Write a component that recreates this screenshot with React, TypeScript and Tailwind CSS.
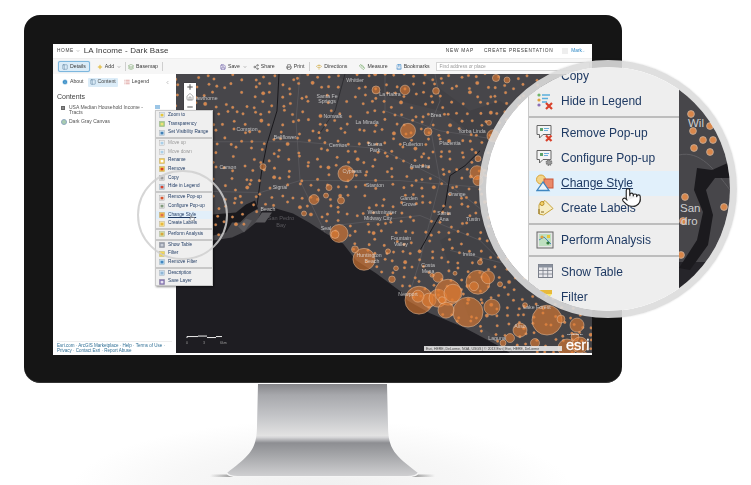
import React from "react";
import { Pointer, Plus, Minus, ChevronLeft, Info, Save, Share2, Printer, Signpost, Ruler, BookMarked, Home, Layers, PanelLeft, List, ChevronDown } from "lucide-react";

type Pt = [number, number];

const COAST: Pt[] = [
  [170, 70], [600, 70], [600, 358], [518, 358], [497, 345], [463, 327], [430, 313], [407, 300], [403, 293], [376, 273],
  [356, 260], [343, 243], [326, 233], [309, 222], [293, 213], [276, 208], [262, 210], [256, 222], [245, 231], [232, 237], [213, 240], [170, 240],
];

function inside(p: Pt, poly: Pt[]) {
  let c = false;
  for (let i = 0, j = poly.length - 1; i < poly.length; j = i++) {
    const [xi, yi] = poly[i];
    const [xj, yj] = poly[j];
    if (yi > p[1] !== yj > p[1] && p[0] < ((xj - xi) * (p[1] - yi)) / (yj - yi) + xi) c = !c;
  }
  return c;
}

function makeDots() {
  let s = 12345;
  const rnd = () => {
    s = (s * 16807) % 2147483647;
    return s / 2147483647;
  };
  const out: Pt[] = [];
  for (let y = 76; y < 352; y += 9.2) {
    for (let x = 178; x < 592; x += 9.4) {
      const p: Pt = [x + (rnd() - 0.5) * 7, y + (rnd() - 0.5) * 7];
      if (rnd() < 0.14) continue;
      if (inside([p[0], p[1] + 3], COAST)) out.push(p);
    }
  }
  return out;
}

const DOTS = makeDots();

const CIRCLES: [number, number, number][] = [
  [376, 89, 4], [405, 89, 4.8], [436, 90, 3.4], [496, 77, 3.6], [507, 79, 3], [408, 130, 7.5], [428, 131, 4], [346, 173, 8], [489, 122, 2.5],
  [478, 158, 3], [477, 172, 7], [478, 180, 5], [493, 135, 6], [263, 166, 3], [329, 187, 3], [314, 199, 5], [341, 200, 3.5], [326, 195, 2.5],
  [304, 213, 2.5], [339, 233, 9], [335, 234, 4], [364, 259, 11], [355, 249, 3.5], [392, 279, 3.3], [396, 268, 2.4], [388, 251, 2.5],
  [419, 300, 14], [429, 300, 7], [418, 296, 6], [438, 277, 5], [438, 298, 9], [448, 292, 13], [453, 293, 9], [468, 312, 15], [446, 310, 8],
  [442, 300, 3.5], [478, 282, 12], [488, 277, 6.5], [474, 286, 4.5], [492, 307, 8], [547, 320, 15], [520, 330, 7], [577, 325, 7], [575, 337, 4],
  [535, 343, 4.5], [510, 338, 4.5], [503, 343, 3], [567, 348, 9], [580, 345, 8], [561, 319, 4], [525, 305, 2.5], [500, 284, 2.5], [455, 273, 2],
  [432, 275, 2], [480, 262, 2.5], [565, 295, 3], [585, 300, 2.5],
];

const LABELS: [string, number, number][] = [
  ["Hawthorne", 205, 99], ["Compton", 247, 130], ["Bellflower", 285, 138], ["Carson", 228, 168], ["Cerritos", 338, 146], ["Norwalk", 333, 117],
  ["Santa Fe", 327, 97], ["Springs", 327, 102], ["Whittier", 355, 81], ["La Habra", 390, 95], ["La Mirada", 367, 123], ["Buena", 375, 145], ["Park", 375, 151],
  ["Fullerton", 413, 145], ["Placentia", 450, 144], ["Yorba Linda", 472, 132], ["Brea", 436, 116], ["Anaheim", 420, 167], ["Stanton", 375, 186], ["Cypress", 352, 172],
  ["Orange", 457, 195], ["Garden", 409, 199], ["Grove", 409, 205], ["Westminster", 382, 214], ["Midway City", 378, 220], ["Santa", 444, 215], ["Ana", 444, 221],
  ["Tustin", 473, 221], ["Fountain", 401, 240], ["Valley", 401, 246], ["Huntington", 369, 257], ["Beach", 372, 263], ["Seal", 326, 230], ["Beach", 268, 210], ["Costa", 428, 267],
  ["Mesa", 428, 273], ["Newport", 408, 296], ["Irvine", 469, 256], ["Laguna", 497, 340], ["Aliso", 520, 328], ["Lake Forest", 537, 309], ["Signal", 280, 188],
];

function MapSvg() {
  return (
    <svg viewBox="176 73 416 280" className="block w-full h-full" preserveAspectRatio="none">
      <rect x="176" y="73" width="416" height="280" fill="#1e1d22" />
      <polygon points={COAST.map((p) => p.join(",")).join(" ")} fill="#47464a" />
      <polygon points="330,73 420,73 470,110 500,100 530,120 510,160 440,110 400,100" fill="#424145" />
      <polygon points="440,240 592,150 592,352 520,352 470,320" fill="#424246" />
      <g fill="none" stroke="#5d5c60" strokeWidth="0.7">
        <path d="M176 141 H300 L380 148 L440 178 L470 200 L520 240 L592 250" />
        <path d="M300 73 L296 120 L300 180 L325 232" />
        <path d="M385 73 L385 110 L440 130 L505 140 L592 150" />
        <path d="M435 73 L440 100 L430 125 L440 180 L420 260 L410 292" />
        <path d="M300 180 H400 L520 190 L592 170" />
        <path d="M335 225 L420 215 L480 240 L540 300" />
        <path d="M176 190 L260 192 L300 180" />
        <path d="M450 250 L500 262 L560 262" />
      </g>
      <g fill="none" stroke="#19181c" strokeWidth="1">
        <path d="M279 73 L277 110 L267 143 L262 168 L257 205" />
        <path d="M480 150 L465 165 L450 175 L445 205 L420 250" />
        <path d="M345 73 L335 110 L318 135" strokeWidth="0.5" />
      </g>
      <g fill="#1a191d">
        <polygon points="213,214 236,212 246,204 255,200 258,208 248,214 240,222 232,222 226,232 213,235" />
        <polygon points="255,222 262,212 272,212 265,222" fill="#5a595d" />
        <polygon points="238,226 246,218 252,220 244,232" fill="#5a595d" />
      </g>
      <g fill="#d8864a" stroke="#a88b78" strokeWidth="0.3">
        {DOTS.map((d, i) => (
          <circle key={i} cx={d[0]} cy={d[1]} r={i % 17 === 0 ? 1.8 : 1.3} />
        ))}
      </g>
      <g fill="#e07a30" fillOpacity="0.62" stroke="#e8bd9b" strokeOpacity="0.75" strokeWidth="0.7">
        {CIRCLES.map((c, i) => (
          <circle key={i} cx={c[0]} cy={c[1]} r={c[2]} />
        ))}
      </g>
      <g fill="#e6e6e6" fontFamily="'Liberation Sans', sans-serif" fontSize="5.2" textAnchor="middle" fillOpacity="0.75">
        {LABELS.map((l, i) => (
          <text key={i} x={l[1]} y={l[2]}>
            {l[0]}
          </text>
        ))}
      </g>
      <g fill="#5a595e" fontFamily="'Liberation Sans', sans-serif" fontSize="5.6" textAnchor="middle">
        <text x="281" y="220">San Pedro</text>
        <text x="281" y="227">Bay</text>
      </g>
      <path d="M187 338 V336.5 H198 M198 336 H207 M207 337.5 H216 M216 336.5 H222" stroke="#eee" strokeWidth="1" fill="none" />
      <g fill="#9a9a9a" fontFamily="'Liberation Sans', sans-serif" fontSize="3.6">
        <text x="186" y="344">0</text>
        <text x="203" y="344">3</text>
        <text x="220" y="344">6km</text>
      </g>
      <rect x="424" y="346" width="138" height="5" fill="#e9e9e9" fillOpacity="0.9" />
      <text x="426" y="350" fontFamily="'Liberation Sans', sans-serif" fontSize="3.5" fill="#444">Esri, HERE, DeLorme, NGA, USGS | © 2013 Esri | Esri, HERE, DeLorme</text>
      <text x="567" y="335" fontFamily="'Liberation Sans', sans-serif" fontSize="2.4" fill="#ffffff">POWERED BY</text>
      <text x="566" y="350" fontFamily="'Liberation Sans', sans-serif" fontSize="14.5" fill="#ffffff" stroke="#ffffff" strokeWidth="0.3">esri</text>
    </svg>
  );
}

function Mini({ a, b }: { a: string; b: string }) {
  return (
    <svg viewBox="0 0 6 6" className="w-[6px] h-[6px] shrink-0">
      <rect x="0.3" y="0.3" width="5.4" height="5.4" fill={a} stroke="#9a9a9a" strokeWidth="0.3" />
      <rect x="1.6" y="1.8" width="2.8" height="2.6" fill={b} />
    </svg>
  );
}

type Row = { t: string; a: string; b: string; off?: boolean; on?: boolean };

const SMALL: Row[][] = [
  [
    { t: "Zoom to", a: "#dce9f5", b: "#e8c63a" },
    { t: "Transparency", a: "#9fcf7d", b: "#f1e07a" },
    { t: "Set Visibility Range", a: "#cfe0ee", b: "#3f7fb5" },
  ],
  [
    { t: "Move up", a: "#eeeeee", b: "#a9cfe9", off: true },
    { t: "Move down", a: "#eeeeee", b: "#a9cfe9", off: true },
    { t: "Rename", a: "#f3c94c", b: "#ffffff" },
    { t: "Remove", a: "#f0d050", b: "#d8402a" },
    { t: "Copy", a: "#dddddd", b: "#9a9a9a" },
    { t: "Hide in Legend", a: "#b9d6ea", b: "#d8402a" },
  ],
  [
    { t: "Remove Pop-up", a: "#e6e6e6", b: "#d8502a" },
    { t: "Configure Pop-up", a: "#e6e6e6", b: "#7f9a7a" },
    { t: "Change Style", a: "#f2c14e", b: "#e0704a", on: true },
    { t: "Create Labels", a: "#f4e3a0", b: "#e8b93a" },
  ],
  [{ t: "Perform Analysis", a: "#cfe0a8", b: "#d9a53a" }],
  [
    { t: "Show Table", a: "#8f97a5", b: "#c9ced6" },
    { t: "Filter", a: "#f5e05a", b: "#e8b93a" },
    { t: "Remove Filter", a: "#bcdcf0", b: "#3f86c0" },
  ],
  [
    { t: "Description", a: "#c9dff0", b: "#8fb5d5" },
    { t: "Save Layer", a: "#7f6db0", b: "#e6e0f0" },
  ],
];

function SmallMenu() {
  return (
    <div className="absolute left-[102px] top-[66px] w-[58px] h-[176px] bg-[#efefef] border border-[#c9c9c9] shadow-[1px_1px_2px_rgba(0,0,0,0.45)]">
      {SMALL.map((sec, i) => (
        <div key={i} className="border-b-2 border-[#c8c8c8] last:border-b-0">
          {sec.map((r) => (
            <div key={r.t} className={`flex items-center gap-[3.5px] pl-[2.5px] h-[8.7px] text-[4.7px] leading-none ${r.on ? "bg-[#e2effa] underline" : ""} ${r.off ? "text-[#9a9a9a]" : "text-[#1f3a63]"}`}>
              <Mini a={r.a} b={r.b} />
              <span className="whitespace-nowrap">{r.t}</span>
            </div>
          ))}
        </div>
      ))}
    </div>
  );
}

function Btn({ icon, label, on, caret, className }: { icon: React.ReactNode; label: string; on?: boolean; caret?: boolean; className?: string }) {
  return (
    <div className={`flex items-center gap-[2px] h-[11px] text-[5.2px] text-[#3a3a3a] whitespace-nowrap ${on ? "border border-[#7db7de] rounded-[2px] bg-[#dbecf8] px-[3px] shadow-[0_0_1px_#7db7de]" : ""} ${className ?? ""}`}>
      {icon}
      <span>{label}</span>
      {caret && <ChevronDown size={4} strokeWidth={2} className="ml-[1px]" />}
    </div>
  );
}

function Screen() {
  return (
    <div className="relative w-[539px] h-[311px] bg-white flex flex-col blur-[0.3px] font-['Liberation_Sans',sans-serif]">
      <div className="flex items-center h-[14px] shrink-0 pl-[4px] pr-[7px]">
        <span className="text-[4.8px] tracking-[0.6px] text-[#444]">HOME</span>
        <ChevronDown size={4} className="ml-[2px] text-[#555]" />
        <span className="ml-[4px] text-[8px] tracking-[0.12px] text-[#3a3a3a]">LA Income - Dark Base</span>
        <span className="ml-auto text-[4.8px] tracking-[0.75px] text-[#3a3a3a]">NEW MAP</span>
        <span className="ml-[10px] text-[4.8px] tracking-[0.65px] text-[#3a3a3a]">CREATE PRESENTATION</span>
        <span className="ml-[9px] w-[6px] h-[6px] bg-[#eeeeee]" />
        <span className="ml-[3px] text-[4.8px] text-[#2a86c4]">Mark</span>
        <ChevronDown size={3} className="text-[#2a86c4]" />
      </div>
      <div className="flex items-center h-[16px] shrink-0 bg-[#f6f6f6] pl-[5px] border-t border-[#eeeeee]">
        <Btn on label="Details" icon={<PanelLeft size={6} className="text-[#5a7f9c]" />} />
        <Btn className="ml-[7px]" caret label="Add" icon={<Plus size={6} strokeWidth={4} className="text-[#e0b62c]" />} />
        <span className="ml-[4px] w-px h-[9px] bg-[#cfcfcf]" />
        <Btn className="ml-[2px]" label="Basemap" icon={<Layers size={6} className="text-[#6a9a5a]" />} />
        <span className="ml-[4px] w-px h-[9px] bg-[#cfcfcf]" />
        <Btn className="ml-[57px]" caret label="Save" icon={<Save size={6} className="text-[#5a4a9c]" />} />
        <Btn className="ml-[6px]" label="Share" icon={<Share2 size={6} className="text-[#555]" />} />
        <Btn className="ml-[11px]" label="Print" icon={<Printer size={6} className="text-[#555]" />} />
        <span className="ml-[5px] w-px h-[9px] bg-[#cfcfcf]" />
        <Btn className="ml-[6px]" label="Directions" icon={<Signpost size={6} className="text-[#c99a1e]" />} />
        <Btn className="ml-[12px]" label="Measure" icon={<Ruler size={6} className="text-[#5a9a4a]" />} />
        <Btn className="ml-[8px]" label="Bookmarks" icon={<BookMarked size={6} className="text-[#3a86c8]" />} />
        <div className="ml-[6px] w-[154px] h-[9px] bg-white border border-[#d5d5d5] flex items-center pl-[3px] text-[4.8px] text-[#999]">Find address or place</div>
      </div>
      <div className="flex flex-1 min-h-0">
        <div className="w-[123px] shrink-0 flex flex-col pl-[4px] pr-[4px] text-[#444]">
          <div className="flex items-center h-[14px] mt-[1px] text-[5.2px] pl-[5px]">
            <Info size={6} className="text-white fill-[#2a86c4]" />
            <span className="ml-[2px]">About</span>
            <div className="ml-[4px] flex items-center gap-[2px] bg-[#dbecf8] px-[2px] h-[9px] rounded-[1px]">
              <PanelLeft size={6} className="text-[#5a7f9c]" />
              <span>Content</span>
            </div>
            <List size={6} className="ml-[6px] text-[#c0504d]" />
            <span className="ml-[2px]">Legend</span>
            <ChevronLeft size={5} className="ml-[16px] text-[#777]" />
          </div>
          <div className="mt-[3px] h-[9px] text-[7px] leading-[9px] pb-[1px] text-[#3f3f3f]">Contents</div>
          <div className="mt-[4px] ml-[4px] flex text-[5px] leading-[5.4px] text-[#555]">
            <span className="mt-[0.5px] w-[4px] h-[4px] bg-[#8b8b8b] border border-[#666] shrink-0" />
            <span className="ml-[4px] w-[84px]">USA Median Household Income - Tracts</span>
            <span className="ml-[2px] w-[5px] h-[4px] bg-[#9cc6e6] shrink-0" />
          </div>
          <div className="mt-[2px] ml-[4px] flex items-center text-[5px] text-[#555]">
            <span className="w-[6px] h-[6px] rounded-full bg-[#a9cdb0] border border-[#8fa8c0] shrink-0" />
            <span className="ml-[2px]">Dark Gray Canvas</span>
          </div>
          <div className="mt-auto mb-[2px] border-t border-[#eeeeee] pt-[1px] text-[4.5px] leading-[5.2px] text-[#2f6f95]">
            <div>Esri.com · ArcGIS Marketplace · Help · Terms of Use ·</div>
            <div>Privacy · Contact Esri · Report Abuse</div>
          </div>
        </div>
        <div className="relative flex-1 mb-[2px]">
          <MapSvg />
          <div className="absolute left-[8px] top-[9px] w-[12px] h-[28px] bg-white flex flex-col items-center justify-between text-[#555] shadow-[0_0_1px_rgba(0,0,0,0.5)]">
            <Plus size={8} strokeWidth={3} />
            <Home size={8} strokeWidth={1.4} />
            <Minus size={8} strokeWidth={3} />
          </div>
        </div>
      </div>
      <SmallMenu />
      <div className="absolute left-[84px] top-[126px] w-[91px] h-[90px] rounded-full border-[2.5px] border-[#cfcfcf]/85" />
      <Pointer size={6} className="absolute left-[136px] top-[171px] text-[#555] fill-white" strokeWidth={1.5} />
    </div>
  );
}

const I = "w-[18px] h-[18px] shrink-0";
const BIG: Record<string, React.ReactNode> = {
  copy: (
    <svg viewBox="0 0 18 18" className={I}><rect x="4" y="2" width="10" height="12" fill="#e5e5e5" stroke="#999" /></svg>
  ),
  hide: (
    <svg viewBox="0 0 18 18" className={I}>
      <circle cx="3" cy="3" r="1.6" fill="#6fb56a" /><circle cx="3" cy="8" r="1.6" fill="#e0a23a" /><circle cx="3" cy="13" r="1.6" fill="#8a6fb5" />
      <path d="M6 3h8M6 6.5h6M6 10h5" stroke="#5aaedc" strokeWidth="1.3" />
      <path d="M10 11l6 6M16 11l-6 6" stroke="#d8402a" strokeWidth="2.2" />
    </svg>
  ),
  remove: (
    <svg viewBox="0 0 18 18" className={I}>
      <path d="M1 1.5h14v9H7L3.5 14v-3.5H1z" fill="#f4f4f4" stroke="#666" />
      <rect x="4" y="4" width="3" height="3" fill="#5aa36a" /><path d="M8 4.5h5M8 6.5h4" stroke="#6aaedc" />
      <path d="M10 11.5l5.5 5.5M15.5 11.5L10 17" stroke="#d8402a" strokeWidth="2.2" />
    </svg>
  ),
  config: (
    <svg viewBox="0 0 18 18" className={I}>
      <path d="M1 1.5h14v9H7L3.5 14v-3.5H1z" fill="#f4f4f4" stroke="#666" />
      <rect x="4" y="4" width="3" height="3" fill="#5aa36a" /><path d="M8 4.5h5M8 6.5h4" stroke="#6aaedc" />
      <circle cx="13" cy="13.5" r="2.6" fill="#999" stroke="#777" strokeWidth="1.6" strokeDasharray="1.3 0.7" />
    </svg>
  ),
  style: (
    <svg viewBox="0 0 18 18" className={I}>
      <circle cx="5" cy="5.5" r="4.5" fill="#f2d48a" stroke="#d9a53a" />
      <rect x="8" y="5" width="9" height="9" fill="#e98a6a" stroke="#c9573a" />
      <path d="M7 8L1 16.5h12z" fill="#e8f3fb" stroke="#3f86c0" strokeWidth="1.3" />
    </svg>
  ),
  labels: (
    <svg viewBox="0 0 18 18" className={I}>
      <path d="M3 5.5L9 1.5 17 9.5 7.5 16 3 15z" fill="#f7edc4" stroke="#c9a43a" />
      <circle cx="6" cy="4.5" r="2" fill="#f4d36a" stroke="#b98f2a" />
      <path d="M3 15v-5M5 13h3" stroke="#8a6a1a" />
    </svg>
  ),
  analysis: (
    <svg viewBox="0 0 18 18" className={I}>
      <rect x="1" y="1" width="16" height="16" fill="#e6e6e6" stroke="#666" />
      <rect x="3" y="3" width="12" height="12" fill="#bfe0c0" />
      <path d="M3 9l5-3 7 7" stroke="#4a86c0" fill="none" />
      <circle cx="6" cy="6" r="1.6" fill="#e0a23a" /><circle cx="12" cy="12" r="1.6" fill="#2f7a3a" /><rect x="11" y="4" width="3" height="3" fill="#e8c63a" />
    </svg>
  ),
  table: (
    <svg viewBox="0 0 18 18" className={I}>
      <rect x="2.5" y="1.5" width="14" height="13" fill="#e8e8ec" stroke="#7a7f8a" />
      <rect x="2.5" y="1.5" width="14" height="3" fill="#8a919e" />
      <path d="M2.5 7.5h14M2.5 11h14M7 4.5v10M11.7 4.5v10" stroke="#7a7f8a" strokeWidth="0.8" />
    </svg>
  ),
  filter: (
    <svg viewBox="0 0 18 18" className={I}>
      <path d="M2 2h14v4H2z" fill="#e8b93a" /><path d="M2 6h14l-4 5H6z" fill="#f8e96a" />
    </svg>
  ),
};

const MAG: { t: string; k: keyof typeof BIG; on?: boolean }[][] = [
  [{ t: "Copy", k: "copy" }, { t: "Hide in Legend", k: "hide" }],
  [
    { t: "Remove Pop-up", k: "remove" },
    { t: "Configure Pop-up", k: "config" },
    { t: "Change Style", k: "style", on: true },
    { t: "Create Labels", k: "labels" },
  ],
  [{ t: "Perform Analysis", k: "analysis" }],
  [{ t: "Show Table", k: "table" }, { t: "Filter", k: "filter" }],
];

function Magnifier() {
  return (
    <div className="absolute left-[479px] top-[60px] w-[258px] h-[258px] rounded-full border-[7px] border-[#dcdcdc]/90 overflow-hidden bg-clip-padding blur-[0.25px] font-['Liberation_Sans',sans-serif] shadow-[0_0_2px_rgba(0,0,0,0.15)]">
      <div className="flex w-[244px] h-[244px] bg-white">
        <div className="w-[42px] shrink-0 bg-white" />
        <div className="w-[151px] shrink-0 bg-[#eeeeee] border-l border-[#c9c9c9]">
          <div className="-mt-[3.5px]">
            {MAG.map((sec, i) => (
              <div key={i} className="border-b-2 border-[#bdbdbd] pb-[2.5px] mb-[2.5px] last:border-b-0">
                {sec.map((r) => (
                  <div key={r.t} className={`flex items-center h-[25px] pl-[7px] gap-[7px] text-[12px] text-[#1f3a63] ${r.on ? "bg-[#e1f0fb]" : ""}`}>
                    {BIG[r.k]}
                    <span className={r.on ? "underline" : ""}>{r.t}</span>
                  </div>
                ))}
              </div>
            ))}
          </div>
        </div>
        <svg viewBox="679 67 51 244" className="w-[51px] h-[244px] shrink-0 block">
          <rect x="679" y="67" width="51" height="244" fill="#47464a" />
          <rect x="679" y="262" width="51" height="49" fill="#26252a" />
          <path d="M679 155C700 150 715 170 730 190" stroke="#5f5e62" fill="none" />
          <path d="M730 162L712 170 697 168 694 190 703 212 697 240 679 268 690 270 708 245 713 215 706 190 715 178 730 178z" fill="#1b1a1e" />
          <g fill="#d8864a" stroke="#c9b3a0" strokeWidth="0.8">
            <circle cx="691" cy="114" r="3.4" /><circle cx="710" cy="126" r="3.4" /><circle cx="693" cy="131" r="3.4" />
            <circle cx="703" cy="140" r="3.4" /><circle cx="713" cy="140" r="3.4" /><circle cx="694" cy="148" r="3.4" /><circle cx="710" cy="152" r="3.4" />
            <circle cx="685" cy="197" r="3.4" /><circle cx="724" cy="207" r="3.4" /><circle cx="683" cy="221" r="3.4" /><circle cx="681" cy="255" r="3.4" />
          </g>
          <g fill="#cfcfcf" fontFamily="'Liberation Sans', sans-serif" fontSize="11.5">
            <text x="688" y="127">Wil</text>
            <text x="680" y="212">San</text>
            <text x="681" y="225">dro</text>
          </g>
        </svg>
      </div>
      <Pointer size={21} strokeWidth={1.3} className="absolute left-[135px] top-[120px] fill-white text-[#222]" />
    </div>
  );
}

function Stand() {
  return (
    <svg viewBox="0 383 751 102" className="block w-[751px] h-[102px]">
      <defs>
        <linearGradient id="st" x1="0" y1="0" x2="0" y2="1">
          <stop offset="0" stopColor="#86868a" />
          <stop offset="0.12" stopColor="#a7a8ac" />
          <stop offset="0.35" stopColor="#c4c5c8" />
          <stop offset="0.56" stopColor="#e2e2e2" />
          <stop offset="0.58" stopColor="#d6d6d8" />
          <stop offset="0.64" stopColor="#8d8e92" />
          <stop offset="0.78" stopColor="#a6a7aa" />
          <stop offset="1" stopColor="#cfcfd1" />
        </linearGradient>
        <radialGradient id="fl" cx="0.5" cy="0.5" r="0.5">
          <stop offset="0" stopColor="#f0f0f0" />
          <stop offset="0.6" stopColor="#f7f7f7" />
          <stop offset="1" stopColor="#ffffff" />
        </radialGradient>
        <linearGradient id="sh" x1="0" y1="0" x2="1" y2="0">
          <stop offset="0" stopColor="#555" stopOpacity="0" />
          <stop offset="0.1" stopColor="#555" stopOpacity="0.6" />
          <stop offset="0.9" stopColor="#555" stopOpacity="0.6" />
          <stop offset="1" stopColor="#555" stopOpacity="0" />
        </linearGradient>
      </defs>
      <ellipse cx="322" cy="490" rx="250" ry="70" fill="url(#fl)" />
      <rect x="210" y="474.500" width="225" height="2.500" fill="url(#sh)" />
      <path d="M258 384H387L388 425C388 450 395 455 418 473L416 476H229L227 473C250 455 257 450 257 425Z" fill="url(#st)" />
      <path d="M227 473C228 476 232 476.5 238 476.5H407C413 476.5 417 476 418 473" stroke="#f5f5f5" strokeWidth="1.2" fill="none" />
    </svg>
  );
}

export default function App() {
  return (
    <div className="relative w-[751px] h-[485px] overflow-hidden bg-white pt-[15px]">
      <div className="ml-[24px] w-[598px] h-[368px] rounded-[16px] bg-[#151515] pl-[29px] pt-[29px] border-b border-[#333]">
        <Screen />
      </div>
      <Stand />
      <Magnifier />
    </div>
  );
}
